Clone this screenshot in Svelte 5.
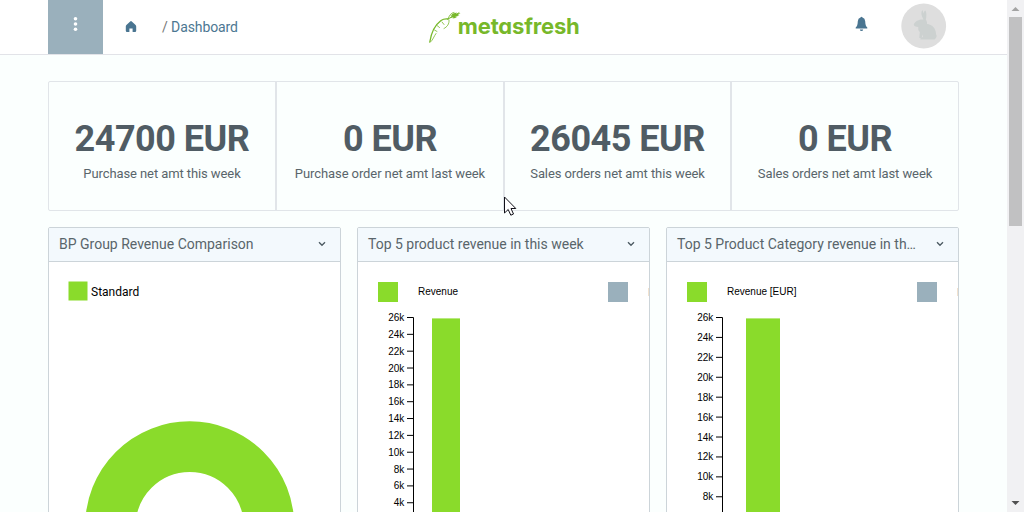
<script>
  const kpis = [
    { value: '24700 EUR', label: 'Purchase net amt this week' },
    { value: '0 EUR', label: 'Purchase order net amt last week' },
    { value: '26045 EUR', label: 'Sales orders net amt this week' },
    { value: '0 EUR', label: 'Sales orders net amt last week' }
  ];
  const charts = [
    { title: 'BP Group Revenue Comparison', kind: 'pie' },
    { title: 'Top 5 product revenue in this week', kind: 'bar', legend: 'Revenue', step: 16.84, count: 12, x: 74, w: 28 },
    { title: 'Top 5 Product Category revenue in th…', kind: 'bar', legend: 'Revenue [EUR]', step: 19.92, count: 10, x: 79, w: 34 }
  ];
  const ticks = (n) => Array.from({ length: n }, (_, i) => 26 - i * 2);
</script>

<div class="window">
  <div class="page">
    <header>
      <div class="menu"><svg width="55" height="54"><g fill="#fff"><circle cx="27.5" cy="18.7" r="1.8"/><circle cx="27.5" cy="24" r="1.8"/><circle cx="27.5" cy="29.3" r="1.8"/></g></svg></div>
      <svg class="home" width="12" height="12" viewBox="0 0 12 12"><path fill="#4a7591" d="M5.2.4Q6 -.2 6.8.4L10.6 4Q11.2 4.7 11.2 5.6V9.7Q11.2 11 10 11H7.6V7.4H4.4V11H2Q.8 11 .8 9.7V5.6Q.8 4.7 1.4 4Z"/></svg>
      <div class="crumb"><span>/</span> Dashboard</div>
      <svg class="logo" width="156" height="40" viewBox="0 0 156 40">
        <g fill="none" stroke="#77b82a" stroke-linecap="round">
          <path stroke-width="1.3" d="M3.8 36C5 28 9 19 15 14.5Q18 12.5 22 13"/>
          <path stroke-width=".8" d="M4.5 36C7 34 8 30 10 27.5M23 14C23.5 18 21 21 18 22.5M11 19.5L13.5 21.5M8.5 24L11 25.5M16 16L18 18.5"/>
          <path stroke-width=".9" d="M22 13C23.5 9 25 7 28 6.5M22 13C26 11 28 10 33 6.7"/>
        </g>
        <path fill="#77b82a" d="M24 10L27 7.5L31 6.4L29.8 7.8L34.5 7L31.5 9.2L33.5 9.6L29 11L31 11.8L26.5 12.4L27.5 11.2L23 12.2L26.5 9.5Z"/>
        <text x="31.8" y="28.4" textLength="122" lengthAdjust="spacing">metasfresh</text>
      </svg>
      <svg class="bell" width="13" height="16" viewBox="0 0 13 16"><path fill="#4a7591" d="M5.5 1.5Q6.5.2 7.5 1.5Q10 2.3 10.2 5.2C10.4 8.5 10.8 10.2 12.3 11.6V12.6H.7V11.6C2.2 10.2 2.6 8.5 2.8 5.2Q3 2.3 5.5 1.5ZM4.8 13.5H8.2Q8 15 6.5 15Q5 15 4.8 13.5Z"/></svg>
      <svg class="avatar" width="46" height="46" viewBox="0 0 46 46"><circle cx="22.7" cy="23" r="22.4" fill="#dedede"/><path fill="#ccd1d0" d="M22.5 16.5C19.8 12 20 8.5 21.5 7L22.5 10.5C23 8.5 23.8 7.5 24.5 7.5C25.8 10 25.5 14 24.8 16.5C26 18 26.2 20 26 21C31 21.5 34.8 25 35 31Q36.5 33 35 35L33.5 36.5H19.5Q18.5 35 22 34V31.5L20.5 35H18.3L18.8 29C17 27.5 17.2 26 17.3 24C14.5 24 12.8 23 12.8 21.2C14 19 17 16 22.5 16.5Z"/></svg>
    </header>
    <main>
      <section class="kpis">
        {#each kpis as k}
          <div class="kpi"><strong>{k.value}</strong><span>{k.label}</span></div>
        {/each}
      </section>
      <section class="cards">
        {#each charts as c}
          <article>
            <div class="title"><h2>{c.title}</h2><svg width="8" height="6" viewBox="0 0 8 6"><path d="M1 1.2L4 4.2L7 1.2" fill="none" stroke="#4f5d65" stroke-width="1.4"/></svg></div>
            {#if c.kind === 'pie'}
              <svg class="chart" width="291" height="251">
                <rect x="19.5" y="19.5" width="19" height="19" fill="#8adb2b"/>
                <text class="name" x="42" y="34">Standard</text>
                <circle cx="140.7" cy="263.8" r="79.2" fill="none" stroke="#8adb2b" stroke-width="50.6"/>
              </svg>
            {:else}
              <svg class="chart" width="291" height="251">
                <rect x="20" y="20" width="20" height="20" fill="#8adb2b"/>
                <text x="60" y="33">{c.legend}</text>
                <rect x="250" y="20" width="20" height="20" fill="#9ab0bc"/>
                <rect x="290" y="26" width="1" height="8" fill="#f2e2cf"/>
                <path d="M49 55.5H55.5V251" fill="none" stroke="#000"/>
                {#each ticks(c.count) as t, i}
                  <path d="M49 {55.5 + i * c.step}H55" stroke="#000"/>
                  <text x="46.3" y={59 + i * c.step} text-anchor="end">{t}k</text>
                {/each}
                <rect x={c.x} y="56.4" width={c.w} height="195" fill="#8adb2b"/>
              </svg>
            {/if}
          </article>
        {/each}
      </section>
    </main>
  </div>
  <div class="scroll">
    <svg width="17" height="17"><path d="M4.5 11L8.5 7L12.5 11Z" fill="#a3a3a3"/></svg>
    <div class="thumb"></div>
    <svg class="down" width="17" height="17"><path d="M4.5 6L8.5 10L12.5 6Z" fill="#505050"/></svg>
  </div>
  <svg class="cursor" width="14" height="21" viewBox="0 0 14 21"><path d="M.5 1V17L4.2 13.5L6.8 19.2L9.5 18L7 12.5H11.8Z" fill="#fff" stroke="#101018"/></svg>
</div>

<style>
  :global(body) { margin: 0; overflow: hidden; }
  .window { position: relative; display: flex; width: 1024px; height: 512px; overflow: hidden; background: #fbfffe; font-family: Roboto, sans-serif; }
  .page { width: 1007px; height: 512px; }
  svg { display: block; flex: none; }
  header { display: flex; box-sizing: border-box; height: 55px; padding-left: 48px; background: #fff; border-bottom: 1px solid #e2e3e8; }
  .menu { width: 55px; height: 54px; background: #9ab0bc; }
  .home { margin: 21px 0 0 22px; }
  .crumb { width: 110px; margin: 18px 0 0 25px; font-size: 14px; line-height: 18px; letter-spacing: -.1px; color: #4c7792; white-space: nowrap; }
  .crumb span { color: #777; }
  .logo { margin: 6px 0 0 154px; overflow: visible; }
  .logo text { font: 700 22px Inter, sans-serif; font-feature-settings: "cv11"; fill: #77b82a; }
  .bell { margin: 16px 0 0 273px; }
  .avatar { margin: 3px 0 0 33px; }
  main { padding: 26px 48px 0; }
  .kpis { display: grid; grid-template-columns: 226px 228px 227px 228px; box-sizing: border-box; width: 911px; height: 130px; border: 1px solid #e1e5e9; border-radius: 2px; }
  .kpi { display: flex; flex-direction: column; align-items: center; padding-top: 36px; }
  .kpi + .kpi { border-left: 2px solid #e1e5e9; }
  .kpi strong { font-size: 36px; line-height: 42px; font-weight: 700; color: #505c64; white-space: nowrap; letter-spacing: -.5px; }
  .kpi span { margin-top: 5px; font-size: 13px; line-height: 18px; letter-spacing: -.09px; color: #59656b; white-space: nowrap; }
  .cards { display: grid; grid-template-columns: repeat(3, 293px); gap: 16px; margin-top: 16px; }
  article { height: 310px; box-sizing: border-box; border: 1px solid #ccd4d9; border-radius: 2px; background: #fff; overflow: hidden; }
  .title { display: flex; align-items: center; justify-content: space-between; height: 33px; padding: 0 14px 0 10px; background: #f3f9fd; border-bottom: 1px solid #ccd4d9; }
  .title svg { margin-top: -1px; }
  h2 { width: 245px; margin: 0 0 2px; white-space: nowrap; font-size: 14px; line-height: 20px; font-weight: 400; color: #59656b; }
  .chart text { font: 10px "Liberation Sans", sans-serif; fill: #000; }
  .chart .name { font: 12px Roboto, sans-serif; }
  .scroll { display: flex; flex-direction: column; width: 17px; height: 512px; background: #f1f1f3; }
  .thumb { width: 13px; height: 209px; margin-left: 2px; background: #c1c1c2; }
  .down { margin-top: auto; }
  .cursor { position: absolute; left: 504px; top: 196px; }
</style>
